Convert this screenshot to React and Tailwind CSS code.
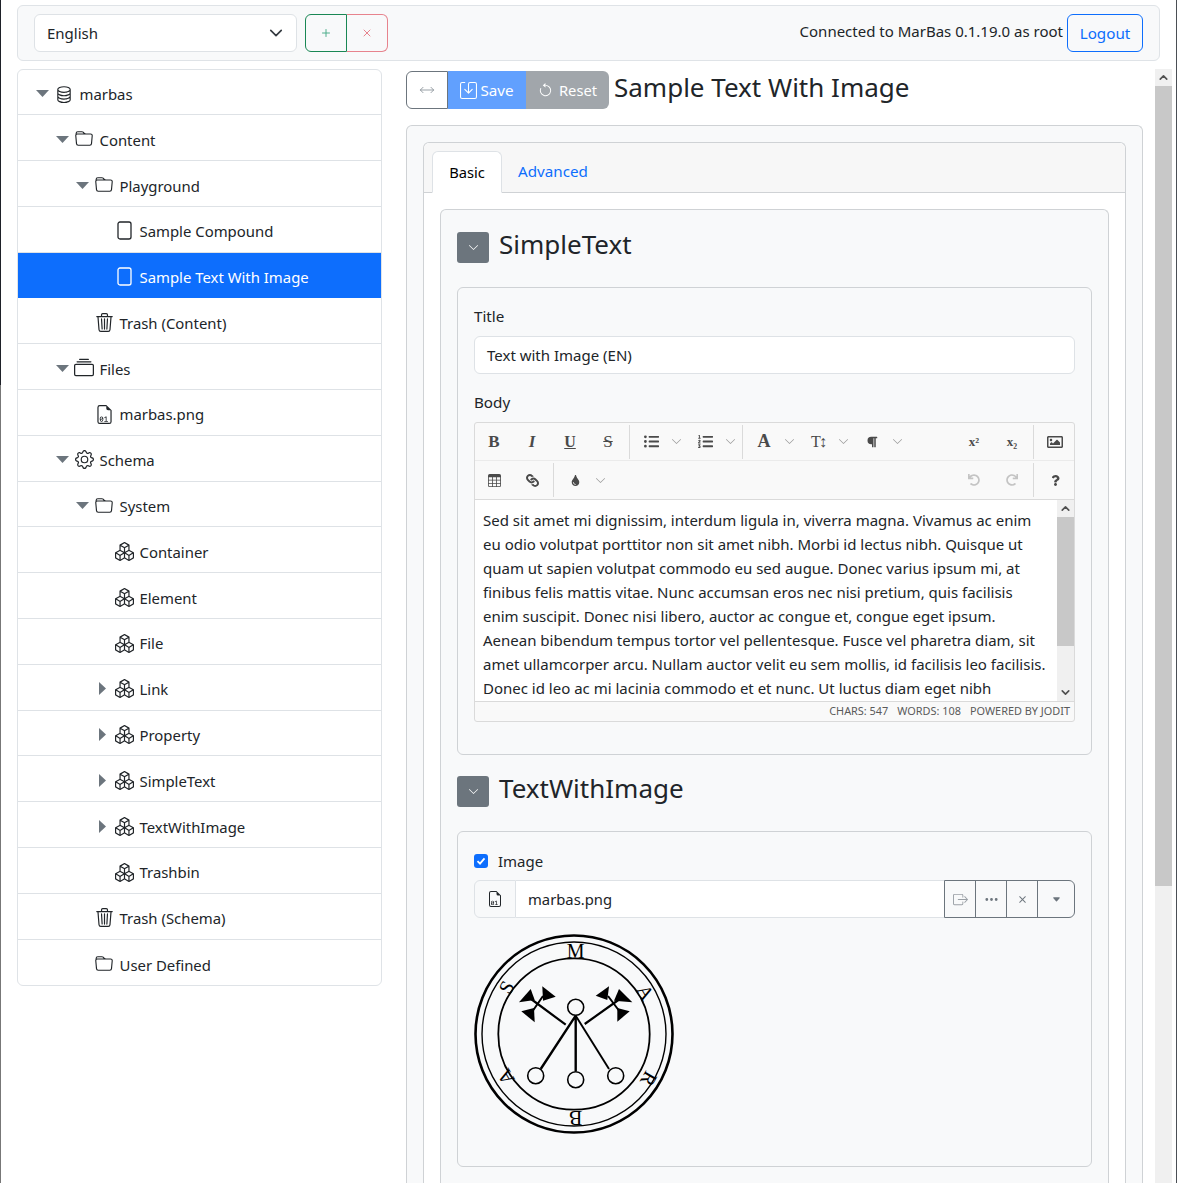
import React from 'react'
import { ChevronDown, ChevronUp, Plus, X, MoveHorizontal } from 'lucide-react'
import { BsDatabase, BsFolder, BsTrash3, BsGear, BsBoxes, BsCollection, BsFileEarmarkBinary, BsBoxArrowRight, BsThreeDots, BsX, BsArrowCounterclockwise, BsSave, BsChevronDown, BsCaretDownFill, BsTable } from 'react-icons/bs'
import { FaListUl, FaListOl, FaParagraph, FaRegImage, FaLink, FaTint, FaUndo, FaRedo, FaQuestion } from 'react-icons/fa'

const font = 'font-["Noto_Sans","Open_Sans",sans-serif]'
const serif = "font-['Liberation_Serif',serif]"

function Caret({ down }) {
  return down ? (
    <svg width="13" height="7" viewBox="0 0 13 7" className="shrink-0"><path d="M0 0h13L6.5 7z" fill="#6c757d" /></svg>
  ) : (
    <svg width="7" height="13" viewBox="0 0 7 13" className="shrink-0 ml-[3px]"><path d="M0 0v13L7 6.5z" fill="#6c757d" /></svg>
  )
}

function Row({ depth, caret, icon, label, active }) {
  return (
    <div className={`h-[45.8px] first:h-[45.3px] flex items-center shrink-0 border-b last:border-b-0 pt-[4.4px] ${active ? 'bg-[#0d6efd] border-[#0d6efd] text-white' : 'border-[#dee2e6] text-[#212529]'}`}>
      <div className="flex items-center shrink-0" style={{ paddingLeft: 18 + depth * 20 }}>
        <div className="w-[18px] flex items-center -mt-[1px]">{caret && <Caret down={caret === 'down'} />}</div>
        <div className="w-[20px] flex justify-center items-center mr-[5.5px] -mt-[1px]">{icon}</div>
        <span className="text-[14.9px] whitespace-nowrap">{label}</span>
      </div>
    </div>
  )
}

const page = <svg width="15" height="19" viewBox="0 0 15 19" fill="none" stroke="currentColor" strokeWidth="1.3"><rect x="1" y="1" width="13" height="17" rx="2" /></svg>
const cubes = <BsBoxes size={19} />
const folder = <BsFolder size={18} />
const trash = <BsTrash3 size={19} />

const tree = [
  [0, 'down', <BsDatabase size={18} />, 'marbas'],
  [1, 'down', folder, 'Content'],
  [2, 'down', folder, 'Playground'],
  [3, null, page, 'Sample Compound'],
  [3, null, page, 'Sample Text With Image', true],
  [2, null, trash, 'Trash (Content)'],
  [1, 'down', <BsCollection size={20} />, 'Files'],
  [2, null, <BsFileEarmarkBinary size={19} />, 'marbas.png'],
  [1, 'down', <BsGear size={19} />, 'Schema'],
  [2, 'down', folder, 'System'],
  [3, null, cubes, 'Container'],
  [3, null, cubes, 'Element'],
  [3, null, cubes, 'File'],
  [3, 'right', cubes, 'Link'],
  [3, 'right', cubes, 'Property'],
  [3, 'right', cubes, 'SimpleText'],
  [3, 'right', cubes, 'TextWithImage'],
  [3, null, cubes, 'Trashbin'],
  [2, null, trash, 'Trash (Schema)'],
  [2, null, folder, 'User Defined'],
]

function ToolBtn({ children, caret }) {
  return (
    <div className="flex items-center h-[34px] shrink-0">
      <div className="w-[38px] flex justify-center items-center text-[#4a4a4a]">{children}</div>
      {caret && <div className="w-[16px]"><BsChevronDown size={11} className="text-[#9a9a9a] ml-[1px]" /></div>}
    </div>
  )
}

const Sep = () => <div className="w-px h-[34px] bg-[#dadada] mx-[2px] shrink-0" />

function Logo() {
  const letters = [
    ['M', 101.7, 17.3, 0],
    ['A', 171.7, 58.3, 60],
    ['R', 175, 145, 120],
    ['B', 101.7, 184, 180],
    ['A', 31.7, 143, 240],
    ['S', 32.3, 53.3, 300],
  ]
  return (
    <svg width="200" height="200" viewBox="0 0 200 200" fill="none" stroke="#000" className="shrink-0">
      <circle cx="100" cy="100" r="98.5" strokeWidth="2.6" />
      <circle cx="100" cy="100" r="92" strokeWidth="1.4" />
      <circle cx="100" cy="100" r="75.7" strokeWidth="1.8" />
      <circle cx="101.7" cy="73.3" r="8" strokeWidth="1.6" />
      <circle cx="61.7" cy="141.7" r="8" strokeWidth="1.6" />
      <circle cx="101.7" cy="145.7" r="8" strokeWidth="1.6" />
      <circle cx="141.7" cy="141.7" r="8" strokeWidth="1.6" />
      <path d="M101.7 81.7V137.3M101.7 81.7L66.7 135" strokeWidth="2.4" />
      <path d="M101.7 81.7L135 135" strokeWidth="1.9" />
      <path d="M91.7 90.7L53 62M110.7 90L150 62" strokeWidth="2.2" />
      <path d="M69 62L58 78M134 62L146 78" strokeWidth="2" />
      <g fill="#000" stroke="none">
        <path d="M56.7 55L45 68.3L60.7 66z" />
        <path d="M68.3 52.3L81.7 62.7L69 66.7z" />
        <path d="M47.3 77.3L60.7 88.3L60 74z" />
        <path d="M145 55L158.3 68.3L140 66.7z" />
        <path d="M135 52.3L121.7 61.7L133.3 66z" />
        <path d="M155.7 77.3L143.3 87.7L143.3 74z" />
      </g>
      <g fill="#000" stroke="none" fontFamily="Liberation Serif, serif" fontSize="20" textAnchor="middle" dominantBaseline="central">
        {letters.map(([c, x, y, a], i) => (
          <text key={i} transform={`translate(${x} ${y}) rotate(${a})`}>{c}</text>
        ))}
      </g>
    </svg>
  )
}

function Heading({ label, top }) {
  return (
    <div className={`${top} flex items-center h-[36px] shrink-0`}>
      <div className="w-[32px] h-[31px] mt-[3px] rounded-[3px] bg-[#6c757d] flex items-center justify-center text-white"><BsChevronDown size={11} /></div>
      <span className="ml-[10px] text-[26px] leading-[36px] -mt-[4px]">{label}</span>
    </div>
  )
}

export default function App() {
  return (
    <div className={`h-[1183px] overflow-hidden bg-white flex ${font} text-[#212529]`}>
      <div className="w-px shrink-0 flex flex-col">
        <div className="h-[385px] bg-[#1e2128]" />
        <div className="flex-1 bg-[#777777]" />
      </div>

      <div className="w-[1175px] shrink-0 flex flex-col">
        {/* top bar */}
        <div className="ml-[16px] mr-[16px] mt-[5px] h-[56px] shrink-0 bg-[#f8f9fa] border border-[#dfe3e7] rounded-[6px] flex items-center pl-[16px] pr-[16px]">
          <div className="w-[263px] h-[38px] bg-white border border-[#dee2e6] rounded-[6px] flex items-center justify-between pl-[12px] pr-[13px] text-[15px]">
            <span>English</span>
            <svg width="14" height="14" viewBox="0 0 16 16" fill="none" stroke="#343a40" strokeWidth="1.9" strokeLinecap="round" strokeLinejoin="round"><path d="M2 5l6 6 6-6" /></svg>
          </div>
          <div className="ml-[8px] flex h-[38px]">
            <div className="w-[42px] border border-[#198754] rounded-l-[6px] flex items-center justify-center"><Plus size={12} className="text-[#4fae8c]" /></div>
            <div className="w-[41px] border border-[#dc3545] border-l-0 rounded-r-[6px] opacity-60 flex items-center justify-center"><X size={12} className="text-[#dc3545]" /></div>
          </div>
          <div className="ml-auto flex items-center">
            <span className="text-[15px] -mt-[3px] mr-[4px]">Connected to MarBas 0.1.19.0 as root</span>
            <div className="w-[76px] h-[38px] border border-[#0d6efd] rounded-[6px] text-[#0d6efd] text-[15.2px] flex items-center justify-center">Logout</div>
          </div>
        </div>

        <div className="flex mt-[8px] flex-1 min-h-0">
          {/* tree */}
          <div className="ml-[16px] w-[365px] self-start shrink-0 border border-[#dfe3e7] rounded-[6px] flex flex-col overflow-hidden">
            {tree.map((r, i) => (
              <Row key={i} depth={r[0]} caret={r[1]} icon={r[2]} label={r[3]} active={r[4]} />
            ))}
          </div>

          {/* editor column */}
          <div className="ml-[24px] w-[737px] shrink-0 flex flex-col">
            <div className="flex items-start h-[56px] shrink-0">
              <div className="flex h-[38px] mt-[2px]">
                <div className="w-[42px] border border-[#6c757d] rounded-l-[6px] flex items-center justify-center text-[#8a9299]"><MoveHorizontal size={16} strokeWidth={1.3} /></div>
                <div className="w-[78px] bg-[#61a0fe] text-white flex items-center justify-center gap-[3px] text-[15.2px]">
                  <BsSave size={17} />
                  Save
                </div>
                <div className="w-[83px] bg-[#a1a6ab] text-white rounded-r-[6px] flex items-center justify-center gap-[6px] text-[14.7px]">
                  <BsArrowCounterclockwise size={15} />
                  Reset
                </div>
              </div>
              <div className="ml-[5px] text-[26px] leading-[36px]">Sample Text With Image</div>
            </div>

            <div className="bg-[#f8f9fa] border border-[#cfd2d5] rounded-t-[6px] border-b-0 px-[16px] pt-[16px] flex-1 min-h-0">
              <div className="bg-white border border-[#cfd2d5] rounded-t-[6px] border-b-0 h-full flex flex-col">
                <div className="bg-[#f7f7f7] h-[50px] shrink-0 border-b border-[#cfd2d5] pl-[8px] flex items-end rounded-t-[6px]">
                  <div className="w-[70px] h-[42px] -mb-px bg-white border border-[#dee2e6] border-b-white rounded-t-[6px] flex items-center justify-center text-[14.7px] text-black">Basic</div>
                  <div className="ml-[16px] h-[41px] flex items-center text-[15.2px] text-[#0d6efd]">Advanced</div>
                </div>
                <div className="px-[16px] pt-[16px] flex-1 min-h-0">
                  <div className="bg-[#f8f9fa] border border-[#cfd2d5] rounded-t-[6px] border-b-0 px-[16px] h-full flex flex-col">
                    <Heading label="SimpleText" top="mt-[18px]" />
                    <div className="mt-[23px] h-[468px] shrink-0 border border-[#cfd2d5] rounded-[6px] px-[16px]">
                      <div className="mt-[16px] text-[15.2px] leading-[24px]">Title</div>
                      <div className="mt-[8px] h-[38px] bg-white border border-[#dee2e6] rounded-[6px] flex items-center px-[12px] text-[15px]">Text with Image (EN)</div>
                      <div className="mt-[16px] text-[15.2px] leading-[24px]">Body</div>
                      <div className="mt-[8px] border border-[#dadada] rounded-[3px] bg-[#f9f9f9] h-[300px] flex flex-col overflow-hidden">
                        <div className="h-[38px] flex items-center shrink-0 border-b border-[#ebebeb]">
                          <ToolBtn><span className={`${serif} font-bold text-[17px]`}>B</span></ToolBtn>
                          <ToolBtn><span className={`${serif} font-bold italic text-[17px]`}>I</span></ToolBtn>
                          <ToolBtn><span className={`${serif} font-bold underline text-[16px]`}>U</span></ToolBtn>
                          <ToolBtn><span className={`${serif} line-through text-[17px]`}>S</span></ToolBtn>
                          <Sep />
                          <ToolBtn caret><FaListUl size={15} /></ToolBtn>
                          <ToolBtn caret><FaListOl size={15} /></ToolBtn>
                          <Sep />
                          <ToolBtn caret><span className={`${serif} font-bold text-[18px]`}>A</span></ToolBtn>
                          <ToolBtn caret><span className={`${serif} text-[16px] tracking-[-2px]`}>T↕</span></ToolBtn>
                          <ToolBtn caret><FaParagraph size={12} /></ToolBtn>
                          <div className="ml-auto flex items-center">
                            <ToolBtn><span className={`text-[13px] font-bold ${serif}`}>x²</span></ToolBtn>
                            <ToolBtn><span className={`text-[13px] font-bold ${serif}`}>x₂</span></ToolBtn>
                            <Sep />
                            <ToolBtn><FaRegImage size={16} /></ToolBtn>
                          </div>
                        </div>
                        <div className="h-[39px] flex items-center shrink-0 border-b border-[#dadada]">
                          <ToolBtn><BsTable size={13} /></ToolBtn>
                          <ToolBtn><FaLink size={13} className="rotate-90" /></ToolBtn>
                          <Sep />
                          <ToolBtn caret><FaTint size={11} /></ToolBtn>
                          <div className="ml-auto flex items-center">
                            <ToolBtn><FaUndo size={12} className="text-[#c4c4c4]" /></ToolBtn>
                            <ToolBtn><FaRedo size={12} className="text-[#c4c4c4]" /></ToolBtn>
                            <Sep />
                            <ToolBtn><FaQuestion size={11} /></ToolBtn>
                          </div>
                        </div>
                        <div className="h-[202px] shrink-0 bg-white flex overflow-hidden border-b border-[#dadada]">
                          <div className="flex-1 pl-[8px] pr-[8px] pt-[8px] text-[15px] leading-[24px] overflow-hidden">
                            Sed sit amet mi dignissim, interdum ligula in, viverra magna. Vivamus ac enim eu odio volutpat porttitor non sit amet nibh. Morbi id lectus nibh. Quisque ut quam ut sapien volutpat commodo eu sed augue. Donec varius ipsum mi, at finibus felis mattis vitae. Nunc accumsan eros nec nisi pretium, quis facilisis enim suscipit. Donec nisi libero, auctor ac congue et, congue eget ipsum. Aenean bibendum tempus tortor vel pellentesque. Fusce vel pharetra diam, sit amet ullamcorper arcu. Nullam auctor velit eu sem mollis, id facilisis leo facilisis. Donec id leo ac mi lacinia commodo et et nunc. Ut luctus diam eget nibh
                          </div>
                          <div className="w-[17px] shrink-0 bg-[#f0f0f0] flex flex-col">
                            <div className="h-[17px] flex items-center justify-center"><ChevronUp size={13} strokeWidth={3} className="text-[#505050]" /></div>
                            <div className="h-[129px] bg-[#c8c8c8]" />
                            <div className="mt-auto h-[17px] flex items-center justify-center"><ChevronDown size={13} strokeWidth={3} className="text-[#505050]" /></div>
                          </div>
                        </div>
                        <div className="flex-1 flex items-center justify-end gap-[9px] pr-[4px] text-[10.9px] text-[#5a5a5a] uppercase whitespace-nowrap">
                          <span>Chars: 547</span><span>Words: 108</span><span>Powered by Jodit</span>
                        </div>
                      </div>
                    </div>
                    <Heading label="TextWithImage" top="mt-[17px]" />
                    <div className="mt-[23px] h-[336px] shrink-0 border border-[#cfd2d5] rounded-[6px] px-[16px]">
                      <div className="mt-[17px] flex items-center h-[24px]">
                        <div className="w-[14px] h-[14px] rounded-[3px] bg-[#0d6efd] flex items-center justify-center">
                          <svg width="10" height="10" viewBox="0 0 10 10" fill="none" stroke="#fff" strokeWidth="1.8"><path d="M1.5 5.2L4 7.7 8.5 2.3" /></svg>
                        </div>
                        <span className="ml-[10px] text-[15px]">Image</span>
                      </div>
                      <div className="mt-[7px] h-[38px] flex">
                        <div className="w-[42px] bg-[#f8f9fa] border border-[#dee2e6] rounded-l-[6px] flex items-center justify-center"><BsFileEarmarkBinary size={16} /></div>
                        <div className="flex-1 bg-white border-y border-[#dee2e6] flex items-center pl-[12px] pt-[1px] text-[14.8px]">marbas.png</div>
                        <div className="flex rounded-r-[6px] border border-[#6c757d] text-[#6c757d]">
                          <div className="w-[31px] flex items-center justify-center border-r border-[#6c757d]"><BsBoxArrowRight size={15} className="text-[#9aa0a6]" /></div>
                          <div className="w-[31px] flex items-center justify-center border-r border-[#6c757d]"><BsThreeDots size={15} /></div>
                          <div className="w-[31px] flex items-center justify-center border-r border-[#6c757d]"><BsX size={15} /></div>
                          <div className="w-[36px] flex items-center justify-center"><BsCaretDownFill size={9} /></div>
                        </div>
                      </div>
                      <div className="mt-[16px]"><Logo /></div>
                    </div>
                  </div>
                </div>
              </div>
            </div>
          </div>

          {/* page scrollbar */}
          <div className="ml-[12px] w-[17px] shrink-0 bg-[#f0f0f0] flex flex-col">
            <div className="h-[17px] flex items-center justify-center"><ChevronUp size={13} strokeWidth={3} className="text-[#505050]" /></div>
            <div className="h-[800px] bg-[#c8c8c8]" />
          </div>
        </div>
      </div>

      <div className="w-px shrink-0 bg-[#4b4f55]" />
    </div>
  )
}
